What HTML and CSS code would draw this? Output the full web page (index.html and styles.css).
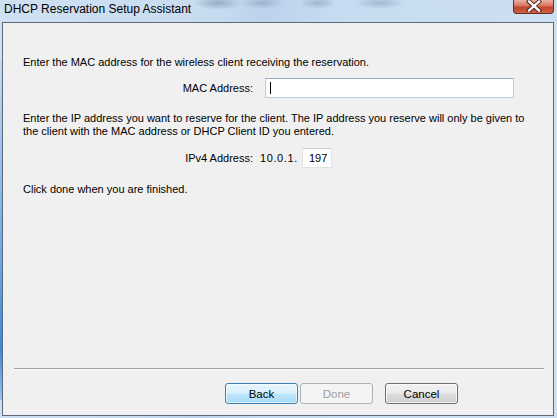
FILE: index.html
```html
<!DOCTYPE html>
<html>
<head>
<meta charset="utf-8">
<link rel="stylesheet" href="styles.css">
</head>
<body>
<div class="window">
  <div class="titlebar">
    <span class="title">DHCP Reservation Setup Assistant</span>
    <div class="close">
      <svg width="18" height="12" viewBox="0 0 18 12">
        <path d="M4 1.5 L14 10.5 M14 1.5 L4 10.5" stroke="#3d1a16" stroke-width="4.2" stroke-linecap="square" fill="none"/>
        <path d="M4 1.5 L14 10.5 M14 1.5 L4 10.5" stroke="#ffffff" stroke-width="2.4" stroke-linecap="square" fill="none"/>
      </svg>
    </div>
  </div>
  <div class="client">
    <div class="content">
      <p class="text intro">Enter the MAC address for the wireless client receiving the reservation.</p>
      <div class="row mac">
        <span class="lbl">MAC Address:</span>
        <div class="input wide"><span class="caret"></span></div>
      </div>
      <p class="text para">Enter the IP address you want to reserve for the client. The IP address you reserve will only be given to<br>the client with the MAC address or DHCP Client ID you entered.</p>
      <div class="row ip">
        <span class="lbl">IPv4 Address:</span>
        <span class="prefix">10.0.1.</span>
        <div class="input small">197</div>
      </div>
      <p class="text done-note">Click done when you are finished.</p>
    </div>
    <div class="footer">
      <div class="sep"></div>
      <div class="buttons">
        <button class="btn focus">Back</button>
        <button class="btn disabled">Done</button>
        <button class="btn cancel">Cancel</button>
      </div>
    </div>
  </div>
</div>
</body>
</html>
```
FILE: styles.css
```css
html, body {
  margin: 0;
  padding: 0;
}
body {
  width: 557px;
  height: 418px;
  overflow: hidden;
  font-family: "Liberation Sans", Arial, sans-serif;
}
.window {
  width: 557px;
  height: 418px;
  display: flex;
  flex-direction: column;
  background:
    radial-gradient(ellipse 24px 7px at 218px 3px, rgba(95,115,140,0.45), rgba(95,115,140,0) 100%),
    radial-gradient(ellipse 22px 6px at 262px 3px, rgba(95,115,140,0.35), rgba(95,115,140,0) 100%),
    radial-gradient(ellipse 18px 6px at 318px 3px, rgba(95,115,140,0.35), rgba(95,115,140,0) 100%),
    radial-gradient(ellipse 26px 6px at 380px 3px, rgba(95,115,140,0.35), rgba(95,115,140,0) 100%),
    linear-gradient(100deg, #cfe0f2 0%, #c7dbf0 35%, #bcd3ec 42%, #c8dcf1 55%, #cde0f3 100%);
  position: relative;
}
.window::before {
  content: "";
  position: absolute;
  left: 0;
  top: 60px;
  width: 2px;
  height: 340px;
  background: linear-gradient(180deg, #c5d9ef 0%, #6aa6e6 60%, #3a86e0 85%, #9cc2ec 100%);
}
.titlebar {
  height: 22px;
  flex: none;
  display: flex;
  justify-content: space-between;
  align-items: flex-start;
}
.title {
  font-family: "Liberation Sans", Arial, sans-serif;
  font-size: 12px;
  line-height: 16px;
  padding: 1px 0 0 4px;
  color: #000;
}
.close {
  width: 41px;
  height: 14px;
  margin-right: 3px;
  box-sizing: border-box;
  border: 1px solid #6b2a22;
  border-top: none;
  border-radius: 0 0 4px 4px;
  background: linear-gradient(180deg, #eab0a2 0%, #d8735f 45%, #c2452c 55%, #cc6044 100%);
  display: flex;
  align-items: center;
  justify-content: center;
}
.close svg {
  display: block;
  margin-top: -2px;
}
.client {
  flex: 1;
  margin: 0 3px 2px 2px;
  border: 1px solid #5e6a78;
  background: #f0f0f0;
  display: flex;
  flex-direction: column;
  font-size: 11px;
  color: #000;
}
.content {
  flex: 1;
  padding: 33px 0 0 20px;
}
.text {
  margin: 0;
  line-height: 13px;
  white-space: nowrap;
}
.row {
  display: flex;
  align-items: center;
  height: 20px;
}
.lbl {
  width: 230px;
  text-align: right;
  flex: none;
}
.mac {
  margin-top: 9px;
}
.mac .input {
  margin-left: 12px;
}
.para {
  margin-top: 14px;
}
.ip {
  margin-top: 10px;
}
.prefix {
  margin-left: 7px;
  width: 39px;
  letter-spacing: 0.6px;
}
.ip .input {
  margin-left: 3px;
}
.input {
  box-sizing: border-box;
  height: 20px;
  background: #fff;
  display: flex;
  align-items: center;
}
.wide {
  width: 249px;
  border: 1px solid #b7cde3;
  border-top-color: #8fb0cf;
  padding-left: 4px;
}
.caret {
  width: 1px;
  height: 12px;
  background: #000;
}
.small {
  width: 30px;
  border: 1px solid #e2e2e2;
  border-top-color: #d0d0d0;
  padding-left: 6px;
}
.done-note {
  margin-top: 15px;
}
.footer {
  flex: none;
  padding-bottom: 11px;
}
.sep {
  height: 1px;
  margin: 0 9px 0 11px;
  background: #a0a0a0;
  border-bottom: 1px solid #ffffff;
}
.buttons {
  display: flex;
  justify-content: flex-end;
  padding-right: 95px;
  margin-top: 13px;
}
.btn {
  box-sizing: border-box;
  width: 73px;
  height: 21px;
  margin: 0;
  padding: 0;
  font-family: "Liberation Sans", Arial, sans-serif;
  font-size: 11.5px;
  color: #000;
  border: 1px solid #707070;
  border-radius: 3px;
  background: linear-gradient(180deg, #f2f2f2 0%, #ebebeb 48%, #dddddd 52%, #cfcfcf 100%);
  box-shadow: inset 0 0 0 1px rgba(255,255,255,0.7);
}
.btn + .btn {
  margin-left: 2px;
}
.btn.cancel {
  margin-left: 12px;
}
.btn.focus {
  border-color: #3c7fb1;
  background: linear-gradient(180deg, #eaf6fd 0%, #d9f0fc 48%, #bee6fd 52%, #a7d9f5 100%);
  box-shadow: inset 0 0 0 1px rgba(255,255,255,0.6);
}
.btn.disabled {
  color: #a0a0a0;
  border-color: #adb2b5;
  background: #f4f4f4;
  box-shadow: none;
}
```
